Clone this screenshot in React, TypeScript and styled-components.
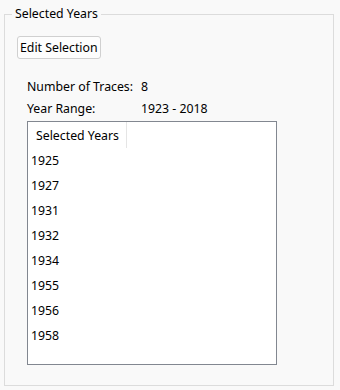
import React from 'react';
import styled, { createGlobalStyle } from 'styled-components';

const years = ['1925', '1927', '1931', '1932', '1934', '1955', '1956', '1958'];

function App() {
  return (
    <>
      <GlobalStyle />
      <Page>
        <GroupBox>
          <Legend>Selected Years</Legend>
          <EditButton>Edit Selection</EditButton>

          <InfoGrid>
            <span>Number of Traces:</span>
            <span>8</span>
            <span>Year Range:</span>
            <span>1923 - 2018</span>
          </InfoGrid>

          <ListBox>
            <HeaderRow>
              <HeaderCell>Selected Years</HeaderCell>
            </HeaderRow>
            {years.map((y) => (
              <Item key={y}>{y}</Item>
            ))}
          </ListBox>
        </GroupBox>
      </Page>
    </>
  );
}

export default App;

const GlobalStyle = createGlobalStyle`
  body {
    margin: 0;
    background: #f9f9f9;
    font-family: "Noto Sans", "Open Sans", sans-serif;
    font-size: 12.3px;
    color: #000;
  }
`;

const Page = styled.div`
  width: 340px;
  height: 390px;
  padding: 14px 6px 0 4px;
  box-sizing: border-box;
`;

const GroupBox = styled.fieldset`
  margin: 0;
  height: 372px;
  box-sizing: border-box;
  border: 1px solid #dcdcdc;
  padding: 0 12px 0 12px;
  position: relative;
`;

const Legend = styled.legend`
  position: absolute;
  top: -9px;
  left: 7px;
  padding: 0 3px;
  background: #f9f9f9;
  line-height: 16px;
`;

const EditButton = styled.button`
  display: block;
  margin: 21px 0 0 0;
  height: 23px;
  padding: 0 2px;
  font: inherit;
  color: #000;
  background: #fdfdfd;
  border: 1px solid #d0d0d0;
  border-radius: 3px;
`;

const InfoGrid = styled.div`
  display: grid;
  grid-template-columns: 114px auto;
  row-gap: 5px;
  margin: 19px 0 0 10px;
  line-height: 17px;
`;

const ListBox = styled.div`
  margin: 4px 0 0 10px;
  width: 250px;
  height: 244px;
  box-sizing: border-box;
  background: #fff;
  border: 1px solid #828790;
`;

const HeaderRow = styled.div`
  display: flex;
  height: 26px;
`;

const HeaderCell = styled.div`
  width: 99px;
  display: flex;
  align-items: center;
  padding-left: 8px;
  box-sizing: border-box;
  border-right: 1px solid #e5e5e5;
`;

const Item = styled.div`
  height: 25px;
  line-height: 25px;
  padding-left: 3px;
`;
